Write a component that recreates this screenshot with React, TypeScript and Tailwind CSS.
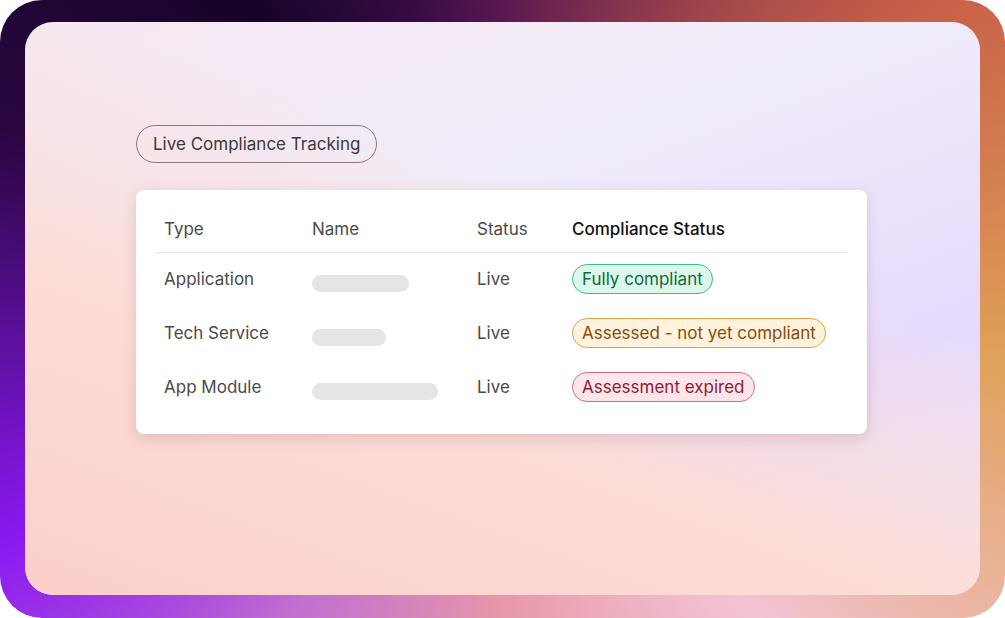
const rows = [
  { type: "Application", bar: "w-[97px]", badge: "Fully compliant", cls: "border-[#3fbf83] bg-[#dcf8ea] text-[#13683f]" },
  { type: "Tech Service", bar: "w-[74px]", badge: "Assessed - not yet compliant", cls: "border-[#e0a248] bg-[#fff3de] text-[#8a4a0c]" },
  { type: "App Module", bar: "w-[126px]", badge: "Assessment expired", cls: "border-[#d66a7f] bg-[#fde6ea] text-[#8e1a35]" },
];

export default function App() {
  return (
    <div className="h-[618px] w-[1005px] bg-white font-[Inter,sans-serif]">
      <div className="h-full w-full rounded-[42px] bg-[conic-gradient(from_0deg_at_50%_50%,#5a1850_0deg,#c86048_55deg,#e0a058_95deg,#f2c4d4_140deg,#e898a8_180deg,#c070d0_215deg,#8a18f0_245deg,#2a0640_290deg,#160428_320deg,#3a0c48_345deg,#5a1850_360deg)] px-[25px] pt-[22px] pb-[23px]">
        <div className="relative h-full w-full overflow-hidden rounded-[28px] bg-[linear-gradient(160deg,#f6e8f2_0%,#f1ecfa_35%,#e6dafd_70%,#f3e6f8_100%)]">
          <div className="absolute inset-0 bg-[linear-gradient(20deg,#fbcfc9_0%,#fcdcd6_35%,rgba(252,225,225,0)_65%)]" />
          <div className="relative flex flex-col pl-[111px] pt-[103px]">
            <div className="w-fit rounded-full border border-[#8a7a80] px-4 py-[8px] text-[17px] leading-[20px] text-[#3a3a3a]">Live Compliance Tracking</div>
            <div className="mt-[27px] h-[244px] w-[731px] rounded-[8px] bg-white px-5 pt-[29px] shadow-[0_4px_14px_rgba(120,60,80,0.18)]">
              <div className="grid grid-cols-[148px_165px_95px_1fr] border-b border-[#e4e4e7] px-[8px] pb-[13px] text-[17px] leading-[20px] text-[#4a4a4a]">
                <span>Type</span><span>Name</span><span>Status</span><span className="font-medium text-[#111]">Compliance Status</span>
              </div>
              {rows.map((r, i) => (
                <div key={i} className={`grid grid-cols-[148px_165px_95px_1fr] px-[8px] text-[17px] leading-[20px] text-[#4a4a4a] ${i === 0 ? "mt-[16px]" : "mt-[29px]"}`}>
                  <span>{r.type}</span>
                  <span className="pt-[6px]"><span className={`block h-[17px] rounded-full bg-[#e5e5e7] ${r.bar}`} /></span>
                  <span>Live</span>
                  <span className="-mt-[5px]"><span className={`inline-block rounded-full border px-[9px] py-[4px] leading-[20px] ${r.cls}`}>{r.badge}</span></span>
                </div>
              ))}
            </div>
          </div>
        </div>
      </div>
    </div>
  );
}
